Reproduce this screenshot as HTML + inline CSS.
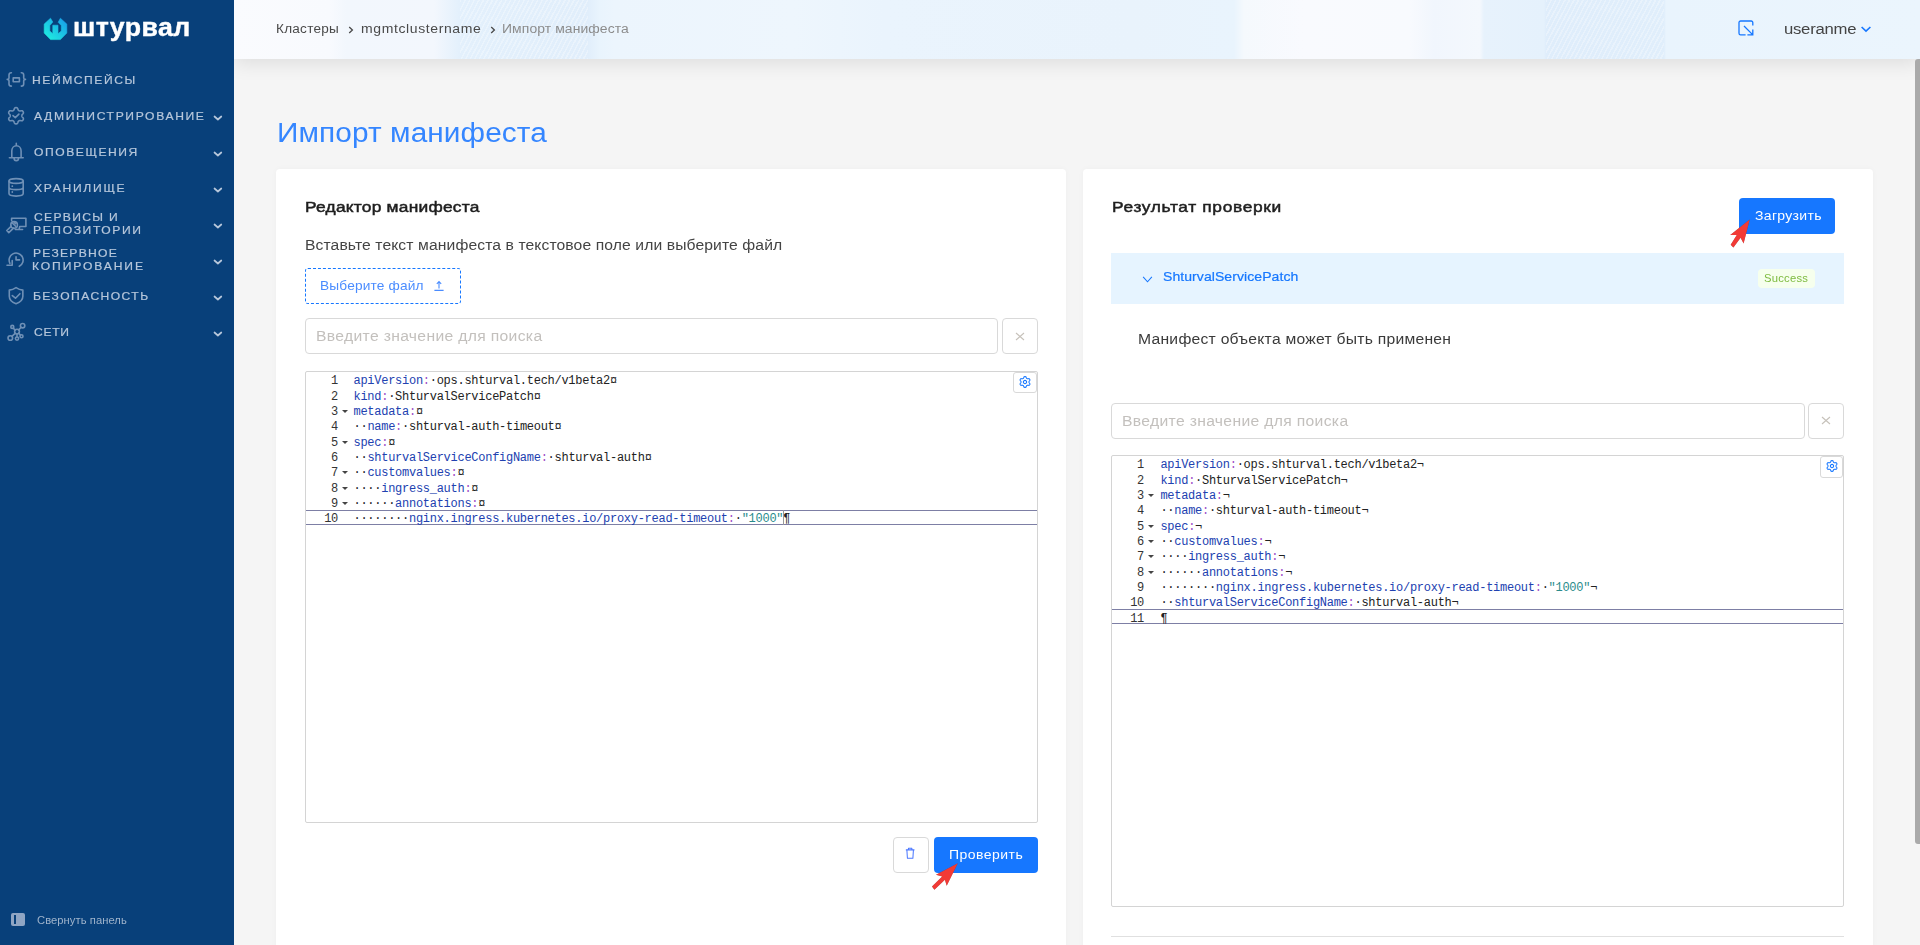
<!DOCTYPE html>
<html lang="ru">
<head>
<meta charset="utf-8">
<title>Импорт манифеста</title>
<style>
*{box-sizing:border-box;margin:0;padding:0}
html,body{width:1920px;height:945px;overflow:hidden}
body{background:#f5f5f5;font-family:"Liberation Sans",sans-serif;color:#333;position:relative}
.t{position:absolute;white-space:nowrap}
svg{position:absolute;overflow:visible}
/* sidebar */
.sidebar{position:absolute;left:0;top:0;width:234px;height:945px;background:#08407a;z-index:5}
.ni{fill:none;stroke:#6f90b6;stroke-width:1.6;stroke-linecap:round;stroke-linejoin:round}
.chev{fill:none;stroke:#b7c7db;stroke-width:1.7;stroke-linecap:round;stroke-linejoin:round}
/* header */
.header{position:absolute;left:234px;top:0;width:1686px;height:59px;background:linear-gradient(90deg,#fafbfe 0,#f8fafe 96px,#f2f7fd 112px,#f3f7fd 200px,#e3f0fc 226px,#e1eefb 354px,#e9f4fd 366px,#ecf5fd 380px,#eef6fd 560px,#eaf4fd 650px,#e9f3fc 900px,#e9f4fd 1000px,#f5f9fd 1010px,#f9fafe 1070px,#f8fafe 1176px,#f1f6fd 1200px,#f4f8fd 1246px,#e7f2fc 1250px,#e5f1fc 1310px,#dfedfb 1312px,#e0eefb 1430px,#e9f4fd 1432px,#ebf5fd 1686px);box-shadow:0 4px 20px rgba(0,0,0,.1);z-index:4}
.hatch{position:absolute;top:0;height:59px;background:repeating-linear-gradient(118deg,rgba(255,255,255,.3) 0 1.5px,rgba(255,255,255,0) 1.5px 4px)}
/* cards */
.card{position:absolute;top:169px;width:790px;height:800px;background:#fff;border-radius:4px;box-shadow:0 0 6px rgba(0,0,0,.03)}
.input{position:absolute;height:36px;border:1px solid #d9d9d9;border-radius:4px;background:#fff}
.xbtn{position:absolute;width:36px;height:36px;border:1px solid #d9d9d9;border-radius:4px;background:#fff}
.btn{position:absolute;height:36px;background:#1677ff;border-radius:4px}
.dashed{position:absolute;width:156px;height:36px;border:1px dashed #1677ff;border-radius:3px}
.colhead{position:absolute;width:733px;height:51px;background:#e6f4ff}
.tag{position:absolute;width:57px;height:19px;background:#f6ffed;border-radius:4px}
.hr{position:absolute;width:733px;height:1px;background:#e0e0e0}
.editor{position:absolute;width:733px;height:452px;border:1px solid #d4d4d4;border-radius:2px;background:#fff;overflow:hidden;font-family:"Liberation Mono",monospace;font-size:12px;letter-spacing:-0.27px;color:#222}
.ln{position:absolute;left:0;width:100%;height:15px;line-height:15px;white-space:pre}
.num{position:absolute;right:699px;top:0;color:#333;text-align:right}
.code{position:absolute;left:47.5px;top:0}
.k{color:#2141b0}.s{color:#2a8c8c}.c{color:#a050c8}
.active{position:absolute;left:0;width:100%;height:15px;border-top:1px solid #7d7fa5;border-bottom:1px solid #7d7fa5}
.fold{position:absolute;left:36px;top:5px;width:0;height:0;border-left:3px solid transparent;border-right:3px solid transparent;border-top:3.5px solid #444}
.cursor{position:absolute;width:1px;height:15px;background:#999}
.gear{position:absolute;width:24px;height:20px;border:1px solid #d9d9d9;border-radius:3px;background:#fff}
.thumb{position:absolute;left:1915px;top:59px;width:6px;height:785px;background:#aaa;border-radius:3px 0 0 3px;z-index:6}
</style>
</head>
<body>
<!-- SIDEBAR -->
<div class="sidebar" id="sidebar">
  <svg style="left:44px;top:17.700px" width="23" height="22" viewBox="0 0 23 22"><defs><linearGradient id="lg" x1="0" y1="1" x2="1" y2="0"><stop offset="0" stop-color="#1ff5df"/><stop offset="1" stop-color="#1899ea"/></linearGradient></defs><path d="M6.5 0.2 L0.2 6.1 L0.2 15.1 L6.5 21.6 L16.4 21.6 L22.8 15.1 L22.8 6.1 L16.4 0.2 L14.2 4.3 L17.3 7.6 L17.3 12.9 L14 15.8 L14 7.2 L8.8 7.2 L8.8 15.8 L5.8 12.9 L5.8 7.6 L8.8 4.1Z" fill="url(#lg)" stroke="url(#lg)" stroke-width=".6" stroke-linejoin="round"/></svg>
  <span class="t" id="logotext" style="left:73.22px;top:10.51px;font-size:25px;line-height:32px;letter-spacing:0.376px;color:#fff;font-weight:bold;-webkit-text-stroke:0.4px #fff;transform:scaleX(1.0682);transform-origin:0 0">штурвал</span>
  <svg style="left:0;top:0" width="234" height="360" viewBox="0 0 234 360">
  <g class="ni">
    <!-- namespaces -->
    <path d="M11.400 72.700c-1.700 0-2.400.7-2.400 2.200v3c0 .9-.6 1.400-1.800 1.450 1.200.05 1.800.55 1.800 1.450v3.100c0 1.500.7 2.200 2.400 2.200M21.300 72.700c1.700 0 2.400.7 2.400 2.200v3c0 .9.600 1.400 1.800 1.450-1.200.05-1.800.55-1.800 1.450v3.100c0 1.500-.7 2.200-2.400 2.200"/>
    <rect x="13.200" y="77.900" width="6.200" height="3.900"/>
    <!-- admin -->
    <path d="M21.90 115.75 L21.91 115.37 L21.99 114.97 L22.25 114.52 L22.81 113.94 L23.32 113.28 L23.45 112.68 L23.34 112.16 L23.11 111.67 L22.81 111.24 L22.41 110.87 L21.82 110.69 L21.00 110.80 L20.22 111.00 L19.69 111.00 L19.31 110.86 L18.98 110.68 L18.65 110.48 L18.34 110.22 L18.08 109.77 L17.86 108.99 L17.55 108.22 L17.10 107.81 L16.58 107.64 L16.05 107.60 L15.52 107.64 L15.00 107.81 L14.55 108.22 L14.24 108.99 L14.02 109.77 L13.76 110.22 L13.45 110.48 L13.13 110.68 L12.79 110.86 L12.41 111.00 L11.88 111.00 L11.10 110.80 L10.28 110.69 L9.69 110.87 L9.29 111.24 L8.99 111.67 L8.76 112.16 L8.65 112.68 L8.78 113.28 L9.29 113.94 L9.85 114.52 L10.11 114.97 L10.19 115.37 L10.20 115.75 L10.19 116.13 L10.11 116.53 L9.85 116.98 L9.29 117.56 L8.78 118.22 L8.65 118.82 L8.76 119.34 L8.99 119.83 L9.29 120.26 L9.69 120.63 L10.28 120.81 L11.10 120.70 L11.88 120.50 L12.41 120.50 L12.79 120.64 L13.12 120.82 L13.45 121.02 L13.76 121.28 L14.02 121.73 L14.24 122.51 L14.55 123.28 L15.00 123.69 L15.52 123.86 L16.05 123.90 L16.58 123.86 L17.10 123.69 L17.55 123.28 L17.86 122.51 L18.08 121.73 L18.34 121.28 L18.65 121.02 L18.98 120.82 L19.31 120.64 L19.69 120.50 L20.22 120.50 L21.00 120.70 L21.82 120.81 L22.41 120.63 L22.81 120.26 L23.11 119.83 L23.34 119.34 L23.45 118.82 L23.32 118.22 L22.81 117.56 L22.25 116.98 L21.99 116.53 L21.91 116.13Z"/>
    <path d="M13 115.600l2.300 1.950 3.600-3.450"/>
    <!-- bell -->
    <path d="M16.300 143.400v1.700M11.800 157.700v-6.800a4.650 5.100 0 0 1 9.300 0v6.800M9.400 157.700h13.800M14.100 158.200a2.200 2.400 0 0 0 4.400 0"/>
    <!-- storage -->
    <ellipse cx="16.100" cy="181" rx="7.100" ry="2.400"/>
    <path d="M9 181v12.600c0 1.400 3.200 2.500 7.100 2.500s7.100-1.100 7.100-2.500V181M9 187.200c0 1.400 3.200 2.400 7.100 2.400s7.100-1 7.100-2.400"/>
    <path d="M12.300 186.100v.1M12.300 192v.1" stroke-width="1.800"/>
    <!-- services -->
    <path d="M11.600 220.600v-2.300h14.300v8.200h-6.200l-.6 2.900M15.300 229.500h7.300"/>
    <circle cx="14.100" cy="224.900" r="3.300"/>
    <path d="M11.300 226.200l-4.500 4.300 2 2.100 4.700-4.400M12.600 223.300l3 3M14.300 222.400l1.200 1.200"/>
    <!-- backup -->
    <path d="M19.300 266.300a7 7 0 1 0-9.400-3M12.200 260.500v4.800h-5.200M16.050 256.700v3.200h3.500"/>
    <!-- security -->
    <path d="M16.050 287.600c-2.200 1.500-4.400 2.300-6.750 2.500v6.200c0 3.500 2.600 6 6.750 7.400 4.150-1.400 6.800-3.900 6.800-7.400v-6.200c-2.350-.2-4.600-1-6.800-2.500z"/>
    <path d="M12.300 295.600l3.200 2.600 4.400-4.500"/>
    <!-- network -->
    <circle cx="17" cy="331.600" r="2.400"/><circle cx="22.600" cy="325.700" r="2.200"/><circle cx="12.300" cy="326.900" r="1.500"/><circle cx="10.300" cy="338" r="2.300"/><circle cx="17" cy="338.600" r="1.600"/><circle cx="21.500" cy="336.200" r="1.500"/>
    <path d="M18.700 329.900l2.400-2.600M15 330.200l-1.500-2M15.200 333.300l-3.300 3.100M17 334v3M18.800 333.200l1.700 1.900"/>
  </g>
</svg>
  <span class="t" id="nav1" style="left:32.41px;top:73.19px;font-size:11px;line-height:14px;letter-spacing:1.402px;color:#b7c7db;-webkit-text-stroke:0.2px #b7c7db;transform:scaleX(1.1000);transform-origin:0 0">НЕЙМСПЕЙСЫ</span>
  <span class="t" id="nav2" style="left:33.83px;top:109.19px;font-size:11px;line-height:14px;letter-spacing:1.481px;color:#b7c7db;-webkit-text-stroke:0.2px #b7c7db;transform:scaleX(1.1000);transform-origin:0 0">АДМИНИСТРИРОВАНИЕ</span>
  <span class="t" id="nav3" style="left:33.50px;top:145.19px;font-size:11px;line-height:14px;letter-spacing:1.425px;color:#b7c7db;-webkit-text-stroke:0.2px #b7c7db;transform:scaleX(1.1000);transform-origin:0 0">ОПОВЕЩЕНИЯ</span>
  <span class="t" id="nav4" style="left:33.50px;top:181.19px;font-size:11px;line-height:14px;letter-spacing:1.549px;color:#b7c7db;-webkit-text-stroke:0.2px #b7c7db;transform:scaleX(1.1000);transform-origin:0 0">ХРАНИЛИЩЕ</span>
  <span class="t" id="nav5a" style="left:33.50px;top:210.39px;font-size:11px;line-height:14px;letter-spacing:1.204px;color:#b7c7db;-webkit-text-stroke:0.2px #b7c7db;transform:scaleX(1.1000);transform-origin:0 0">СЕРВИСЫ И</span>
  <span class="t" id="nav5b" style="left:32.50px;top:223.19px;font-size:11px;line-height:14px;letter-spacing:1.458px;color:#b7c7db;-webkit-text-stroke:0.2px #b7c7db;transform:scaleX(1.1000);transform-origin:0 0">РЕПОЗИТОРИИ</span>
  <span class="t" id="nav6a" style="left:32.50px;top:246.39px;font-size:11px;line-height:14px;letter-spacing:1.158px;color:#b7c7db;-webkit-text-stroke:0.2px #b7c7db;transform:scaleX(1.1000);transform-origin:0 0">РЕЗЕРВНОЕ</span>
  <span class="t" id="nav6b" style="left:32.41px;top:259.19px;font-size:11px;line-height:14px;letter-spacing:1.706px;color:#b7c7db;-webkit-text-stroke:0.2px #b7c7db;transform:scaleX(1.1000);transform-origin:0 0">КОПИРОВАНИЕ</span>
  <span class="t" id="nav7" style="left:32.50px;top:289.19px;font-size:11px;line-height:14px;letter-spacing:1.300px;color:#b7c7db;-webkit-text-stroke:0.2px #b7c7db;transform:scaleX(1.1000);transform-origin:0 0">БЕЗОПАСНОСТЬ</span>
  <span class="t" id="nav8" style="left:33.50px;top:325.19px;font-size:11px;line-height:14px;letter-spacing:0.638px;color:#b7c7db;-webkit-text-stroke:0.2px #b7c7db;transform:scaleX(1.1000);transform-origin:0 0">СЕТИ</span>
  <svg style="left:213px;top:114px" width="10" height="7" viewBox="0 0 10 7"><path class="chev" d="M1.5 2.500l3.400 3 3.400-3"/></svg>
  <svg style="left:213px;top:150px" width="10" height="7" viewBox="0 0 10 7"><path class="chev" d="M1.5 2.500l3.400 3 3.400-3"/></svg>
  <svg style="left:213px;top:186px" width="10" height="7" viewBox="0 0 10 7"><path class="chev" d="M1.5 2.500l3.400 3 3.400-3"/></svg>
  <svg style="left:213px;top:222px" width="10" height="7" viewBox="0 0 10 7"><path class="chev" d="M1.5 2.500l3.400 3 3.400-3"/></svg>
  <svg style="left:213px;top:258px" width="10" height="7" viewBox="0 0 10 7"><path class="chev" d="M1.5 2.500l3.400 3 3.400-3"/></svg>
  <svg style="left:213px;top:294px" width="10" height="7" viewBox="0 0 10 7"><path class="chev" d="M1.5 2.500l3.400 3 3.400-3"/></svg>
  <svg style="left:213px;top:330px" width="10" height="7" viewBox="0 0 10 7"><path class="chev" d="M1.5 2.500l3.400 3 3.400-3"/></svg>
  <div style="position:absolute;left:11px;top:913px;width:14px;height:13px;background:#8fa5c3;border-radius:2px"><div style="position:absolute;left:3px;top:2px;width:2px;height:9px;background:#08407a"></div></div>
  <span class="t" id="collapse" style="left:36.59px;top:914.04px;font-size:10px;line-height:13px;letter-spacing:0.055px;color:#9fb3cb;transform:scaleX(1.1200);transform-origin:0 0">Свернуть панель</span>
</div>
<!-- HEADER -->
<div class="header" id="header">
  <div class="hatch" style="left:226px;width:128px"></div>
  <div class="hatch" style="left:1312px;width:118px"></div>
  <span class="t" id="bc1" style="left:42.13px;top:20.67px;font-size:12.5px;line-height:16px;letter-spacing:0.235px;color:#4a4a4a;transform:scaleX(1.0844);transform-origin:0 0">Кластеры</span>
  <svg style="left:114px;top:26.200px" width="6" height="8" viewBox="0 0 6 8"><path d="M1.2 1l3.2 3-3.2 3" fill="none" stroke="#4a4a4a" stroke-width="1.3"/></svg>
  <span class="t" id="bc2" style="left:126.83px;top:20.67px;font-size:12.5px;line-height:16px;letter-spacing:0.547px;color:#4a4a4a;transform:scaleX(1.1200);transform-origin:0 0">mgmtclustername</span>
  <svg style="left:256px;top:26.200px" width="6" height="8" viewBox="0 0 6 8"><path d="M1.2 1l3.2 3-3.2 3" fill="none" stroke="#4a4a4a" stroke-width="1.3"/></svg>
  <span class="t" id="bc3" style="left:267.53px;top:20.67px;font-size:12.5px;line-height:16px;letter-spacing:0.070px;color:#8c8c8c;transform:scaleX(1.1151);transform-origin:0 0">Импорт манифеста</span>
  <svg style="left:1504px;top:20px" width="16" height="16" viewBox="0 0 16 16"><path d="M14.8 5.6V2.6a1.6 1.6 0 0 0-1.6-1.6H2.6A1.6 1.6 0 0 0 1 2.6v10.6a1.6 1.6 0 0 0 1.6 1.6h5" fill="none" stroke="#1677ff" stroke-width="1.3"/><path d="M6 6l8.6 8.6M14.800 9.400v5.400H9.400" fill="none" stroke="#1677ff" stroke-width="1.3"/></svg>
  <span class="t" id="user" style="left:1549.52px;top:18.73px;font-size:15.2px;line-height:20px;letter-spacing:-0.234px;color:#444;transform:scaleX(1.0995);transform-origin:0 0">useranme</span>
  <svg style="left:1627px;top:26.400px" width="10" height="6" viewBox="0 0 10 6"><path d="M.6 1l4.400 4.200 4.400-4.200" fill="none" stroke="#1677ff" stroke-width="1.6"/></svg>
</div>
<span class="t" id="title" style="left:277.07px;top:115.64px;font-size:27px;line-height:35px;letter-spacing:0.086px;color:#3586ff;transform:scaleX(1.1032);transform-origin:0 0">Импорт манифеста</span>
<!-- LEFT CARD -->
<div class="card" style="left:276px" id="cardL">

  <span class="t" id="h2L" style="left:29.16px;top:28.12px;font-size:15.5px;line-height:20px;letter-spacing:0.204px;color:#1f1f1f;-webkit-text-stroke:0.5px #1f1f1f;transform:scaleX(1.1200);transform-origin:0 0">Редактор манифеста</span>
  <span class="t" id="pL" style="left:28.98px;top:67.15px;font-size:14px;line-height:18px;letter-spacing:0.091px;color:#444;transform:scaleX(1.1200);transform-origin:0 0">Вставьте текст манифеста в текстовое поле или выберите файл</span>
  <div class="dashed" style="left:29px;top:99px"><svg style="left:127px;top:11px" width="12" height="12" viewBox="0 0 12 12"><path d="M6 8.4V1.8M3.8 3.8L6 1.6l2.200 2.200M1.4 10.400h9.200" fill="none" stroke="#4a8cff" stroke-width="1.1"/></svg></div>
  <span class="t" id="pick" style="left:44.23px;top:108.00px;font-size:13px;line-height:17px;letter-spacing:0.158px;color:#4a8cff;transform:scaleX(1.0532);transform-origin:0 0">Выберите файл</span>
  <div class="input" style="left:29px;top:149px;width:693px"></div>
  <span class="t" id="phL" style="left:40.43px;top:158.15px;font-size:14px;line-height:18px;letter-spacing:0.297px;color:#c3c0bd;transform:scaleX(1.1200);transform-origin:0 0">Введите значение для поиска</span>
  <div class="xbtn" style="left:726px;top:149px"><svg style="left:12.900px;top:13.9px" width="8" height="7" viewBox="0 0 8 7"><path d="M0 0l8 7M8 0l-8 7" stroke="#c6c1ba" stroke-width="1.1" fill="none"/></svg></div>
  <div class="editor" style="left:29px;top:202px">
    <div class="active" style="top:138px"></div>
    <div class="ln" style="top:2.40px"><span class="num">1</span><span class="code"><span class="k">apiVersion</span><span class="c">:</span>·ops.shturval.tech/v1beta2¤</span></div>
    <div class="ln" style="top:17.73px"><span class="num">2</span><span class="code"><span class="k">kind</span><span class="c">:</span>·ShturvalServicePatch¤</span></div>
    <div class="ln" style="top:33.07px"><span class="num">3</span><span class="fold"></span><span class="code"><span class="k">metadata</span><span class="c">:</span>¤</span></div>
    <div class="ln" style="top:48.40px"><span class="num">4</span><span class="code">··<span class="k">name</span><span class="c">:</span>·shturval-auth-timeout¤</span></div>
    <div class="ln" style="top:63.73px"><span class="num">5</span><span class="fold"></span><span class="code"><span class="k">spec</span><span class="c">:</span>¤</span></div>
    <div class="ln" style="top:79.07px"><span class="num">6</span><span class="code">··<span class="k">shturvalServiceConfigName</span><span class="c">:</span>·shturval-auth¤</span></div>
    <div class="ln" style="top:94.40px"><span class="num">7</span><span class="fold"></span><span class="code">··<span class="k">customvalues</span><span class="c">:</span>¤</span></div>
    <div class="ln" style="top:109.73px"><span class="num">8</span><span class="fold"></span><span class="code">····<span class="k">ingress_auth</span><span class="c">:</span>¤</span></div>
    <div class="ln" style="top:125.06px"><span class="num">9</span><span class="fold"></span><span class="code">······<span class="k">annotations</span><span class="c">:</span>¤</span></div>
    <div class="ln" style="top:140.40px"><span class="num">10</span><span class="code">········<span class="k">nginx.ingress.kubernetes.io/proxy-read-timeout</span><span class="c">:</span>·<span class="s">"1000"</span>¶</span></div>
    <div class="cursor" style="left:477px;top:138px"></div>
    <div class="gear" style="left:707px;top:0;width:24px;height:21px"><svg style="left:10.95px;top:8.9px" width="1" height="1" viewBox="0 0 1 1"><path d="M4.00 0.00 L4.02 -0.35 L4.14 -0.73 L4.56 -1.22 L4.92 -1.79 L4.90 -2.29 L4.71 -2.72 L4.43 -3.10 L4.01 -3.37 L3.34 -3.34 L2.70 -3.22 L2.31 -3.30 L2.00 -3.46 L1.70 -3.65 L1.44 -3.95 L1.22 -4.56 L0.91 -5.16 L0.47 -5.39 L0.00 -5.44 L-0.47 -5.39 L-0.91 -5.16 L-1.22 -4.56 L-1.44 -3.95 L-1.70 -3.65 L-2.00 -3.46 L-2.31 -3.30 L-2.70 -3.22 L-3.34 -3.34 L-4.01 -3.37 L-4.43 -3.10 L-4.71 -2.72 L-4.90 -2.29 L-4.92 -1.79 L-4.56 -1.22 L-4.14 -0.73 L-4.02 -0.35 L-4.00 -0.00 L-4.02 0.35 L-4.14 0.73 L-4.56 1.22 L-4.92 1.79 L-4.90 2.29 L-4.71 2.72 L-4.43 3.10 L-4.01 3.37 L-3.34 3.34 L-2.70 3.22 L-2.31 3.30 L-2.00 3.46 L-1.70 3.65 L-1.44 3.95 L-1.22 4.56 L-0.91 5.16 L-0.47 5.39 L-0.00 5.44 L0.47 5.39 L0.91 5.16 L1.22 4.56 L1.44 3.95 L1.70 3.65 L2.00 3.46 L2.31 3.30 L2.70 3.22 L3.34 3.34 L4.01 3.37 L4.43 3.10 L4.71 2.72 L4.90 2.29 L4.92 1.79 L4.56 1.22 L4.14 0.73 L4.02 0.35Z" fill="none" stroke="#1677ff" stroke-width="1.05" stroke-linejoin="round"/><circle cx="0" cy="0" r="1.650" fill="none" stroke="#1677ff" stroke-width="1.05"/></svg></div>
  </div>
  <div class="xbtn" style="left:617px;top:668px"><svg style="left:10.800px;top:9.300px" width="10.300" height="12.500" viewBox="0 0 12 14" preserveAspectRatio="none"><path d="M1 3.2h10M4 3V1.400h4V3M2.2 3.400l.6 9.200h6.400l.6-9.200" fill="none" stroke="#4c78ff" stroke-width="1.2" stroke-linejoin="round"/></svg></div>
  <div class="btn" style="left:658px;top:668px;width:104px"></div>
  <span class="t" id="btnCheck" style="left:672.83px;top:677.67px;font-size:12.5px;line-height:16px;letter-spacing:0.412px;color:#fff;transform:scaleX(1.1200);transform-origin:0 0">Проверить</span>

</div>
<!-- RIGHT CARD -->
<div class="card" style="left:1083px" id="cardR">

  <span class="t" id="h2R" style="left:29.10px;top:28.12px;font-size:15.5px;line-height:20px;letter-spacing:0.583px;color:#1f1f1f;-webkit-text-stroke:0.5px #1f1f1f;transform:scaleX(1.1200);transform-origin:0 0">Результат проверки</span>
  <div class="btn" style="left:656px;top:29px;width:96px"></div>
  <span class="t" id="btnLoad" style="left:671.50px;top:38.67px;font-size:12.5px;line-height:16px;letter-spacing:0.283px;color:#fff;transform:scaleX(1.1200);transform-origin:0 0">Загрузить</span>
  <div class="colhead" style="left:28px;top:84px">
    <svg style="left:31px;top:22.700px" width="11" height="7" viewBox="0 0 12 8"><path d="M1 1l5 5.600L11 1" fill="none" stroke="#1677ff" stroke-width="1.2"/></svg>
    <div class="tag" style="left:647px;top:16px"></div>
  </div>
  <span class="t" id="ssp" style="left:79.65px;top:98.50px;font-size:13px;line-height:17px;letter-spacing:0.054px;color:#1677ff;-webkit-text-stroke:0.2px #1677ff;transform:scaleX(1.0794);transform-origin:0 0">ShturvalServicePatch</span>
  <span class="t" id="succ" style="left:681.49px;top:102.19px;font-size:11px;line-height:14px;letter-spacing:0.216px;color:#7dbb3f;transform:scaleX(1.0246);transform-origin:0 0">Success</span>
  <span class="t" id="pR" style="left:55.43px;top:161.15px;font-size:14px;line-height:18px;letter-spacing:0.224px;color:#3a3a3a;transform:scaleX(1.1200);transform-origin:0 0">Манифест объекта может быть применен</span>
  <div class="input" style="left:28px;top:234px;width:694px"></div>
  <span class="t" id="phR" style="left:39.43px;top:243.15px;font-size:14px;line-height:18px;letter-spacing:0.297px;color:#c3c0bd;transform:scaleX(1.1200);transform-origin:0 0">Введите значение для поиска</span>
  <div class="xbtn" style="left:725px;top:234px"><svg style="left:12.900px;top:12.9px" width="8" height="7" viewBox="0 0 8 7"><path d="M0 0l8 7M8 0l-8 7" stroke="#c6c1ba" stroke-width="1.1" fill="none"/></svg></div>
  <div class="editor" style="left:28px;top:286px">
    <div class="active" style="top:153px"></div>
    <div class="ln" style="top:2.40px"><span class="num">1</span><span class="code" style="left:48.4px"><span class="k">apiVersion</span><span class="c">:</span>·ops.shturval.tech/v1beta2¬</span></div>
    <div class="ln" style="top:17.73px"><span class="num">2</span><span class="code" style="left:48.4px"><span class="k">kind</span><span class="c">:</span>·ShturvalServicePatch¬</span></div>
    <div class="ln" style="top:33.07px"><span class="num">3</span><span class="fold"></span><span class="code" style="left:48.4px"><span class="k">metadata</span><span class="c">:</span>¬</span></div>
    <div class="ln" style="top:48.40px"><span class="num">4</span><span class="code" style="left:48.4px">··<span class="k">name</span><span class="c">:</span>·shturval-auth-timeout¬</span></div>
    <div class="ln" style="top:63.73px"><span class="num">5</span><span class="fold"></span><span class="code" style="left:48.4px"><span class="k">spec</span><span class="c">:</span>¬</span></div>
    <div class="ln" style="top:79.07px"><span class="num">6</span><span class="fold"></span><span class="code" style="left:48.4px">··<span class="k">customvalues</span><span class="c">:</span>¬</span></div>
    <div class="ln" style="top:94.40px"><span class="num">7</span><span class="fold"></span><span class="code" style="left:48.4px">····<span class="k">ingress_auth</span><span class="c">:</span>¬</span></div>
    <div class="ln" style="top:109.73px"><span class="num">8</span><span class="fold"></span><span class="code" style="left:48.4px">······<span class="k">annotations</span><span class="c">:</span>¬</span></div>
    <div class="ln" style="top:125.06px"><span class="num">9</span><span class="code" style="left:48.4px">········<span class="k">nginx.ingress.kubernetes.io/proxy-read-timeout</span><span class="c">:</span>·<span class="s">"1000"</span>¬</span></div>
    <div class="ln" style="top:140.40px"><span class="num">10</span><span class="code" style="left:48.4px">··<span class="k">shturvalServiceConfigName</span><span class="c">:</span>·shturval-auth¬</span></div>
    <div class="ln" style="top:155.73px"><span class="num">11</span><span class="code" style="left:48.4px">¶</span></div>
    <div class="gear" style="left:708px;top:0;width:23px;height:22px"><svg style="left:10.8px;top:8.9px" width="1" height="1" viewBox="0 0 1 1"><path d="M4.00 0.00 L4.02 -0.35 L4.14 -0.73 L4.56 -1.22 L4.92 -1.79 L4.90 -2.29 L4.71 -2.72 L4.43 -3.10 L4.01 -3.37 L3.34 -3.34 L2.70 -3.22 L2.31 -3.30 L2.00 -3.46 L1.70 -3.65 L1.44 -3.95 L1.22 -4.56 L0.91 -5.16 L0.47 -5.39 L0.00 -5.44 L-0.47 -5.39 L-0.91 -5.16 L-1.22 -4.56 L-1.44 -3.95 L-1.70 -3.65 L-2.00 -3.46 L-2.31 -3.30 L-2.70 -3.22 L-3.34 -3.34 L-4.01 -3.37 L-4.43 -3.10 L-4.71 -2.72 L-4.90 -2.29 L-4.92 -1.79 L-4.56 -1.22 L-4.14 -0.73 L-4.02 -0.35 L-4.00 -0.00 L-4.02 0.35 L-4.14 0.73 L-4.56 1.22 L-4.92 1.79 L-4.90 2.29 L-4.71 2.72 L-4.43 3.10 L-4.01 3.37 L-3.34 3.34 L-2.70 3.22 L-2.31 3.30 L-2.00 3.46 L-1.70 3.65 L-1.44 3.95 L-1.22 4.56 L-0.91 5.16 L-0.47 5.39 L-0.00 5.44 L0.47 5.39 L0.91 5.16 L1.22 4.56 L1.44 3.95 L1.70 3.65 L2.00 3.46 L2.31 3.30 L2.70 3.22 L3.34 3.34 L4.01 3.37 L4.43 3.10 L4.71 2.72 L4.90 2.29 L4.92 1.79 L4.56 1.22 L4.14 0.73 L4.02 0.35Z" fill="none" stroke="#1677ff" stroke-width="1.05" stroke-linejoin="round"/><circle cx="0" cy="0" r="1.650" fill="none" stroke="#1677ff" stroke-width="1.05"/></svg></div>
  </div>
  <div class="hr" style="left:28px;top:767px"></div>

</div>
<svg style="left:0;top:0;z-index:7" width="1920" height="945" viewBox="0 0 1920 945"><g fill="#f23a36" style="filter:drop-shadow(.5px .8px .5px rgba(40,60,60,.55))"><polygon points="957.8,863.3 936,874.7 942.2,876.4 932,886.4 934.4,889.8 944.9,879.8 946.7,885.8"/><polygon points="1749.7,219.4 1730.25,234.9 1736.8,235.1 1730.7,244.8 1733.4,247.6 1740.6,237.8 1743.6,243.5"/></g></svg>
<div class="thumb"></div>
</body>
</html>
